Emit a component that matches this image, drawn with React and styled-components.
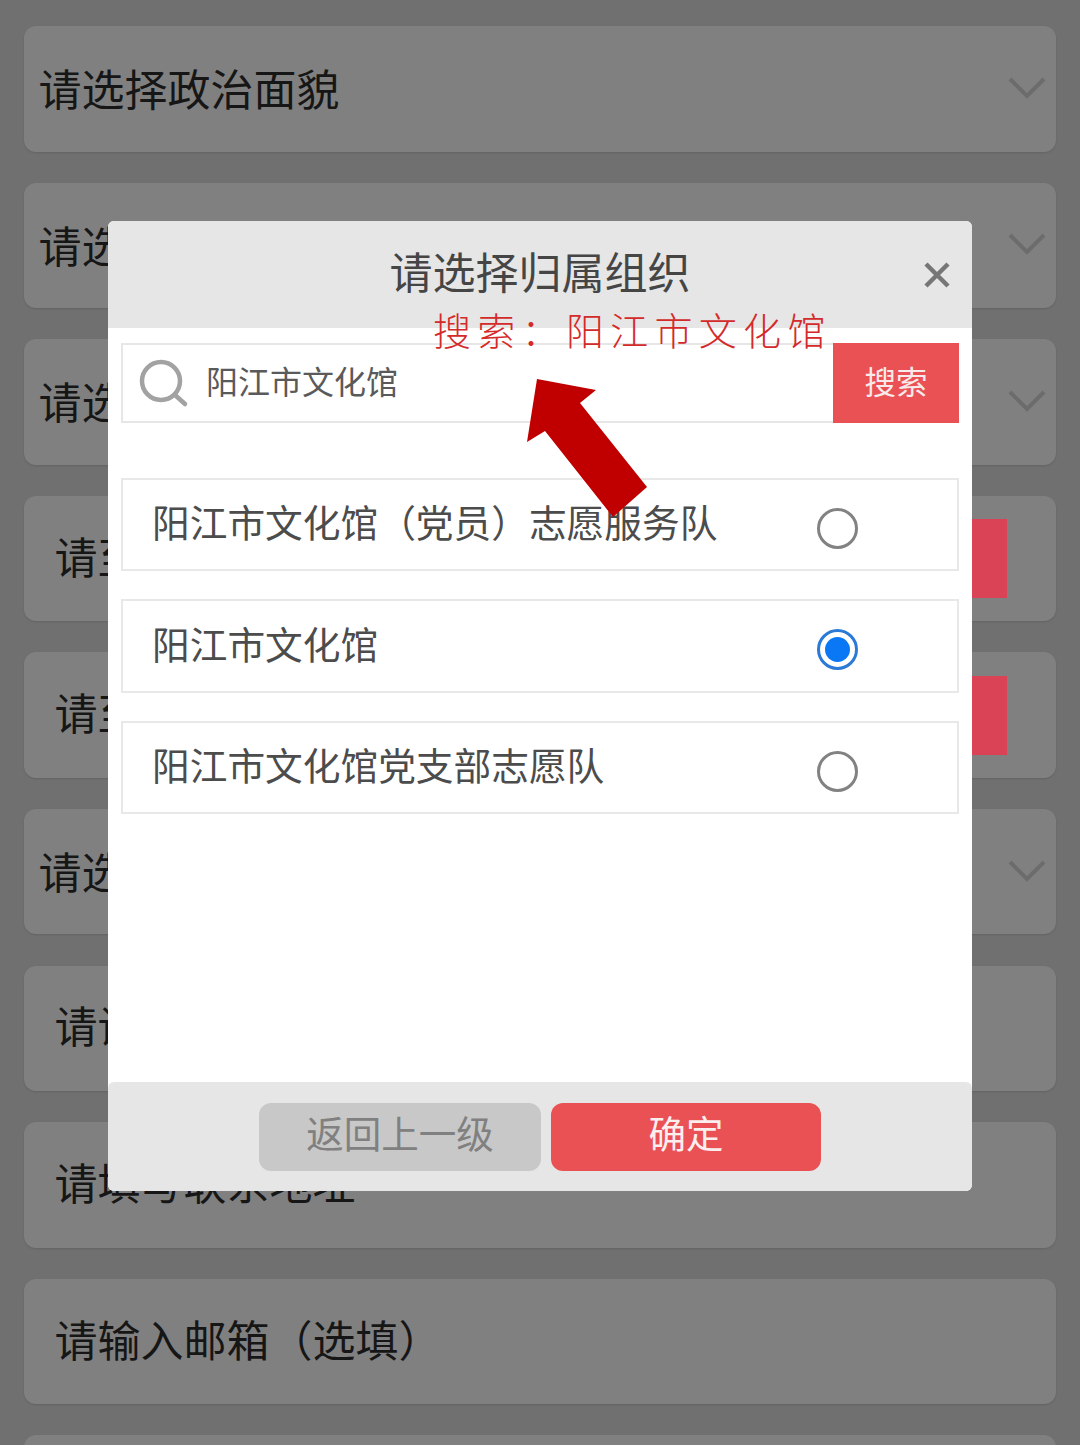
import React from 'react';
import styled, { createGlobalStyle } from 'styled-components';

const Global = createGlobalStyle`
  html, body { margin: 0; padding: 0; height: 1445px; overflow: hidden; background: #707070; }
  * { box-sizing: border-box; }
  body { font-family: "Noto Sans CJK SC", "Liberation Sans", sans-serif; }
`;

const Page = styled.div`
  position: relative;
  width: 1080px;
  height: 1445px;
  overflow: hidden;
  background: #707070;
  padding: 26px 24px 0;
  display: flex;
  flex-direction: column;
  gap: 31.1px;
`;

const Field = styled.div`
  flex: none;
  height: 125.5px;
  border-radius: 12px;
  background: #808080;
  box-shadow: 0 1px 2px rgba(0, 0, 0, 0.12);
  display: flex;
  align-items: center;
  justify-content: space-between;
  padding: 0 ${p => (p.$select ? '10px' : '49px')} 0 ${p => (p.$select ? '14.5px' : '30.5px')};
`;

const FieldText = styled.span`
  font-size: 43px;
  line-height: 1;
  color: #161616;
  white-space: nowrap;
  margin-top: ${p => (p.$select ? '-2px' : '-7px')};
`;

const Chevron = styled.svg`
  width: 38px;
  height: 24px;
  margin-top: -2px;
  fill: none;
  stroke: #6c6c6c;
  stroke-width: 4;
`;

const CodeButton = styled.div`
  width: 227px;
  height: 79px;
  background: #da4355;
  color: #fff;
  font-size: 32px;
  display: flex;
  align-items: center;
  justify-content: flex-end;
  padding-right: 35px;
`;

const Modal = styled.div`
  position: absolute;
  left: 108px;
  top: 221px;
  width: 864px;
  height: 970px;
  background: #fff;
  border-radius: 6px;
  overflow: hidden;
  display: flex;
  flex-direction: column;
`;

const Header = styled.div`
  flex: none;
  height: 107px;
  background: #e6e6e6;
  display: flex;
  align-items: flex-start;
  justify-content: center;
  padding-top: 26px;
  position: relative;
`;

const Title = styled.h2`
  margin: 0;
  font-size: 43px;
  line-height: 46px;
  font-weight: 400;
  color: #454545;
`;

const Close = styled.svg`
  position: absolute;
  right: 21px;
  top: 40px;
  width: 28px;
  height: 28px;
  stroke: #767676;
  stroke-width: 4.5;
  fill: none;
`;

const Body = styled.div`
  flex: 1;
  padding: 15px 13px 0;
  display: flex;
  flex-direction: column;
`;

const SearchBar = styled.div`
  height: 80px;
  border: 2px solid #e6e6e6;
  display: flex;
  align-items: center;
  margin-bottom: 54.5px;
`;

const SearchIcon = styled.svg`
  width: 52px;
  height: 52px;
  margin-left: 14px;
  flex: none;
  fill: none;
  stroke: #a2a2a2;
  stroke-width: 4.5;
  stroke-linecap: round;
`;

const SearchValue = styled.span`
  flex: 1;
  margin-left: 17px;
  margin-top: -7px;
  font-size: 32px;
  line-height: 1;
  color: #5a5a5a;
`;

const SearchButton = styled.div`
  flex: none;
  width: 126px;
  height: 80px;
  margin: -2px -2px -2px 0;
  background: #e95154;
  color: #f8eaea;
  font-size: 31.5px;
  display: flex;
  align-items: center;
  justify-content: center;
  padding-bottom: 6px;
`;

const Options = styled.div`
  display: flex;
  flex-direction: column;
  gap: 28px;
`;

const Option = styled.div`
  height: 93.5px;
  border: 2px solid #e8e8e8;
  display: flex;
  align-items: center;
  justify-content: space-between;
  padding: 0 100px 0 29px;
`;

const OptionText = styled.span`
  font-size: 37.7px;
  line-height: 1;
  color: #4c4c4c;
  white-space: nowrap;
  margin-top: -6px;
`;

const Radio = styled.span`
  flex: none;
  width: 41px;
  height: 41px;
  margin: 8px -1px 0 0;
  border-radius: 50%;
  border: 3px solid ${p => (p.$on ? '#2a7ad6' : '#828282')};
  display: flex;
  align-items: center;
  justify-content: center;
  &::after {
    content: '';
    width: 25px;
    height: 25px;
    border-radius: 50%;
    background: ${p => (p.$on ? '#0a78f5' : 'transparent')};
  }
`;

const Footer = styled.div`
  flex: none;
  height: 109px;
  background: #e6e6e6;
  border-radius: 6px;
  display: flex;
  justify-content: center;
  gap: 10px;
  padding-top: 21px;
`;

const FooterButton = styled.div`
  width: ${p => (p.$primary ? '270px' : '282px')};
  height: 68px;
  border-radius: 12px;
  background: ${p => (p.$primary ? '#e95154' : '#c8c8c8')};
  color: ${p => (p.$primary ? '#fbeeee' : '#808080')};
  font-size: 37.5px;
  display: flex;
  align-items: center;
  justify-content: center;
  padding-bottom: 12px;
`;

const Note = styled.div`
  position: absolute;
  left: 433px;
  top: 307px;
  font-family: "Liberation Serif", "Noto Sans CJK SC", serif;
  font-weight: 300;
  font-size: 38px;
  line-height: 50px;
  letter-spacing: 6.3px;
  color: #d42a2a;
  white-space: nowrap;
`;

const Arrow = styled.svg`
  position: absolute;
  left: 520px;
  top: 370px;
  width: 140px;
  height: 155px;
`;

const fields = [
  ['请选择政治面貌', 'select'],
  ['请选择民族', 'select'],
  ['请选择学历', 'select'],
  ['请至少填写手机号', 'code'],
  ['请至少填写验证码', 'code'],
  ['请选择性别', 'select'],
  ['请设置登录密码', 'input'],
  ['请填写联系地址', 'input'],
  ['请输入邮箱（选填）', 'input'],
  ['', 'input'],
];

const options = [
  ['阳江市文化馆（党员）志愿服务队', false],
  ['阳江市文化馆', true],
  ['阳江市文化馆党支部志愿队', false],
];

export default function App() {
  return (
    <Page>
      <Global />
      {fields.map(([text, kind], i) => (
        <Field key={i} $select={kind === 'select'}>
          <FieldText $select={kind === 'select'}>{text}</FieldText>
          {kind === 'select' && (
            <Chevron viewBox="0 0 38 24"><path d="M2 3 L19 20 L36 3" /></Chevron>
          )}
          {kind === 'code' && <CodeButton>获取验证码</CodeButton>}
        </Field>
      ))}
      <Modal>
        <Header>
          <Title>请选择归属组织</Title>
          <Close viewBox="0 0 28 28"><path d="M3 3 L25 25 M25 3 L3 25" /></Close>
        </Header>
        <Body>
          <SearchBar>
            <SearchIcon viewBox="0 0 52 52">
              <circle cx="24" cy="24" r="19" />
              <path d="M38 38 L48 47" />
            </SearchIcon>
            <SearchValue>阳江市文化馆</SearchValue>
            <SearchButton>搜索</SearchButton>
          </SearchBar>
          <Options>
            {options.map(([text, on]) => (
              <Option key={text}>
                <OptionText>{text}</OptionText>
                <Radio $on={on} />
              </Option>
            ))}
          </Options>
        </Body>
        <Footer>
          <FooterButton>返回上一级</FooterButton>
          <FooterButton $primary>确定</FooterButton>
        </Footer>
      </Modal>
      <Note>搜索：阳江市文化馆</Note>
      <Arrow viewBox="520 370 140 155">
        <polygon points="537,379 596,390 580,403 647,487 613,517 545,431 527,442" fill="#c00000" />
      </Arrow>
    </Page>
  );
}
